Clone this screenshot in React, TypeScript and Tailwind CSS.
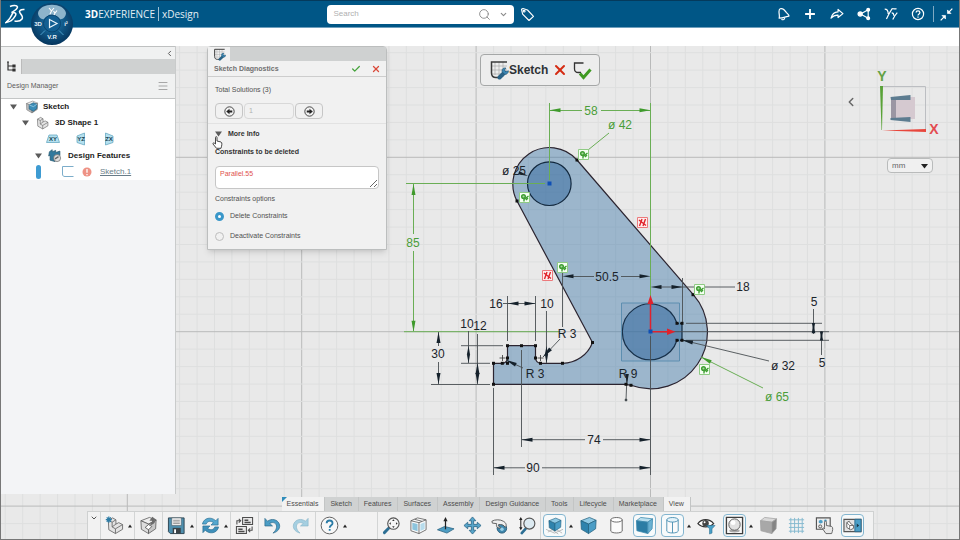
import type { ReactNode } from 'react';
import clsx from 'clsx';
import { Check, ChevronDown, ChevronLeft, Menu, Search, X } from 'lucide-react';

/* ---------- Icons ---------- */

function Icon({ size = 20, children }: { size?: number; children: ReactNode }) {
  return (
    <svg className="shrink-0" width={size} height={size} viewBox="0 0 20 20" fill="none" aria-hidden="true">
      {children}
    </svg>
  );
}

function Cube({ top, left, right, stroke }: { top: string; left: string; right: string; stroke: string }) {
  return (
    <g stroke={stroke} strokeWidth="0.8" strokeLinejoin="round">
      <path d="M11 1.5 L18 4.5 L10 8.5 L2 5 Z" fill={top} />
      <path d="M2 5 L10 8.5 V18.5 L2.5 14 Z" fill={left} />
      <path d="M18 4.5 L10 8.5 V18.5 L17.5 13.5 Z" fill={right} />
    </g>
  );
}

function Cylinder({ blue }: { blue?: boolean }) {
  return (
    <g stroke={blue ? '#3d87ab' : '#555'} strokeWidth="0.9">
      <path d="M4 4 V16 C5.5 18.5 14.5 18.5 16 16 V4" fill="#fbfbfb" />
      <ellipse cx="10" cy="4" rx="6" ry="2.4" fill={blue ? '#e4f3fa' : '#fff'} />
      {blue && <path d="M10 6.4 V17.8" />}
    </g>
  );
}

function Part() {
  return (
    <g stroke="#666" strokeWidth="0.9" strokeLinejoin="round">
      <path d="M3.5 4.5 L8 2 L11.5 4 V8.5 L14.5 7 L18.5 9 V14 L11 18.5 L4 14.5 Z" fill="#e4e4e4" />
      <path d="M3.5 4.5 L7.5 6.5 V11.5 L11 13.5 L18.5 9 M7.5 6.5 L11.5 4 M11 13.5 V18.5 M7.5 11.5 L11.5 8.5" />
    </g>
  );
}

function SketchGrid() {
  return (
    <>
      <path d="M6 2 V15 M10 2 V17 M14 2 V17 M3 6 H18 M3 10 H18 M3 14 H18" stroke="#aaa" strokeWidth="0.7" />
      <path d="M18 2 H2.5 V13 C2.5 16 4 17.5 7 17.5 H10" stroke="#3b3b3b" strokeWidth="1.5" />
      <path d="M10.5 17.5 L15.5 12.5" stroke="#2a6387" strokeWidth="4" strokeLinecap="round" />
      <path d="M13 11.5 C12.5 8.5 15 7.5 17 8 L15.5 10 L16.5 11.5 L19.5 10.8 C19.5 13.5 17 15 15 14 Z" fill="#3a86b4" stroke="#24526f" strokeWidth="0.6" />
    </>
  );
}

const blueCube = <Cube top="#8fc9e4" left="#2f83ad" right="#4a9dc6" stroke="#24627f" />;

const toolIcons: Record<string, ReactNode> = {
  New: (
    <>
      <Part />
      <path d="M4 0.5 V7 M0.8 3.8 H7.2 M1.8 1.5 L6.2 6 M6.2 1.5 L1.8 6" stroke="#2c7ca6" strokeWidth="1.3" />
    </>
  ),
  Insert: (
    <>
      <Cube top="#eee" left="#ddd" right="#c7c7c7" stroke="#555" />
      <path d="M6.5 12 L10 9 L13.5 11 L10 14.5 Z" fill="#fff" stroke="#555" strokeWidth="0.9" />
      <path d="M13 9.5 C16 8.5 17.5 6.5 16.5 4.5 L19 4.5 L14 0.8 L11 5 H13.5 C14 6.5 13 8 11 8.5 Z" fill="#6b6b6b" />
    </>
  ),
  Save: (
    <>
      <path d="M1.5 2 H18 V18.5 H3.5 L1.5 16.5 Z" fill="#4e8fae" stroke="#2c4452" />
      <path d="M5 2 H15 V10 H5 Z" fill="#f4f4f4" stroke="#4b5b64" strokeWidth="0.6" />
      <path d="M6.5 4.5 H13.5 M6.5 6.3 H13.5 M6.5 8 H13.5" stroke="#777" strokeWidth="0.8" />
      <path d="M6 12.5 H14.5 V18.5 H6 Z" fill="#3b4347" />
      <path d="M7.5 14 H9.5 V18 H7.5 Z" fill="#fff" />
    </>
  ),
  Update: (
    <>
      <path d="M1.5 8.5 C3 1.5 11 0.5 15.5 5 L18 2.5 V9.5 H10.5 L13 7 C10 4.5 6.5 5.5 5.5 8.5 Z" fill="#55a8cf" stroke="#286c91" strokeWidth="0.7" />
      <path d="M18.5 11.5 C17 18.5 9 19.5 4.5 15 L2 17.5 V10.5 H9.5 L7 13 C10 15.5 13.5 14.5 14.5 11.5 Z" fill="#3f90ba" stroke="#286c91" strokeWidth="0.7" />
    </>
  ),
  Replace: (
    <g stroke="#4c4c4c" strokeWidth="1.1">
      <path d="M8 1.5 H18.5 V9 H8 Z M1.5 11 H12 V18.5 H1.5 Z" fill="#e8e8e8" />
      <path d="M10 4.5 H14 M10 6.8 H16.5 M3.5 14 H8 M3.5 16.3 H10" strokeWidth="1.5" />
      <path d="M2 9 V5 H5.5 M4 3 L6 5 L4 7 M18 11 V15 H14.5 M16 13 L14 15 L16 17" />
    </g>
  ),
  Undo: <path d="M2 2.5 V10.5 H10 L7 7.8 C11 5.5 15 8 14.2 12 C14 14.5 12.5 16 10.5 18 C16.5 16.5 18.7 12 17 8 C15 3.5 9 2.2 4.8 5.5 Z" fill="#4b9dc5" stroke="#276385" strokeWidth="0.7" />,
  Redo: <path d="M18 2.5 V10.5 H10 L13 7.8 C9 5.5 5 8 5.8 12 C6 14.5 7.5 16 9.5 18 C3.5 16.5 1.3 12 3 8 C5 3.5 11 2.2 15.2 5.5 Z" fill="#a5cfe1" stroke="#88b5c8" strokeWidth="0.7" />,
  Help: (
    <>
      <circle cx="10" cy="10" r="8.8" fill="#f8f8f8" stroke="#5c5c5c" />
      <path d="M7 7.5 C7 3.8 13.2 3.8 13.2 7.5 C13.2 9.7 10.2 9.8 10.2 12.3 M10.2 13.6 V15.6" stroke="#2c7ca6" strokeWidth="1.9" />
    </>
  ),
  'Fit all': (
    <>
      <path d="M2.5 17.5 L7 13" stroke="#2d6f94" strokeWidth="3" strokeLinecap="round" />
      <circle cx="12" cy="8" r="6" fill="#f5f5f5" stroke="#555" strokeWidth="1.2" />
      <path d="M12 3.5 L13.3 5.3 H10.7 Z M12 12.5 L13.3 10.7 H10.7 Z M7.5 8 L9.3 6.7 V9.3 Z M16.5 8 L14.7 6.7 V9.3 Z" fill="#333" />
    </>
  ),
  Views: (
    <g stroke="#515151" strokeWidth="0.8" strokeLinejoin="round">
      <path d="M2 5 L9 2 L18 4 V14.5 L10.5 18.5 L2 15.5 Z" fill="#fafafa" />
      <path d="M3.5 7 L9 8.5 V16 L3.5 14.3 Z" fill="#8cc4dd" stroke="none" />
      <path d="M12 8.3 L16.5 6.5 V13.8 L12 15.8 Z" fill="#b7dcec" stroke="none" />
      <path d="M2 5 L10.5 7 L18 4 M10.5 7 V18.5 M6 3.5 L13.5 5.5" />
    </g>
  ),
  'Normal view': (
    <>
      <path d="M1.5 14.5 L9 11 L19 13.5 L11.5 18 Z" fill="#4e9dc3" stroke="#28617f" strokeWidth="0.8" />
      <path d="M10 14 V4" stroke="#222" strokeWidth="1.3" />
      <path d="M10 1 L12.2 5.5 H7.8 Z" fill="#222" />
    </>
  ),
  Pan: <path d="M10 1 L13.5 5 H11.2 V8.8 H15 V6.5 L19 10 L15 13.5 V11.2 H11.2 V15 H13.5 L10 19 L6.5 15 H8.8 V11.2 H5 V13.5 L1 10 L5 6.5 V8.8 H8.8 V5 H6.5 Z" fill="#57a5ca" stroke="#266181" strokeWidth="0.8" />,
  Rotate: (
    <>
      <circle cx="12.5" cy="13" r="5" fill="#3f88ae" stroke="#285b78" />
      <path d="M2 5.5 C5 3.5 11 3.5 14 5.5 C17 7 18 10 16 12 C14.5 9 12 9 9 9 C8 11 10.5 11.5 12 13 C8 13 6 11.5 7 8 L2.5 7.5 Z" fill="#eee" stroke="#4e4e4e" strokeWidth="0.9" />
      <circle cx="12.6" cy="14" r="1.8" fill="#9ad0e8" />
    </>
  ),
  Zoom: (
    <>
      <path d="M5 18 L9 13.5" stroke="#2d6f94" strokeWidth="2.8" strokeLinecap="round" />
      <circle cx="13" cy="8" r="5.8" fill="#dceaf1" stroke="#555" strokeWidth="1.2" />
      <path d="M4 3 V13" stroke="#222" strokeWidth="1.1" />
      <path d="M4 1 L5.8 4.2 H2.2 Z M4 15 L5.8 11.8 H2.2 Z" fill="#222" />
    </>
  ),
  Perspective: (
    <>
      <path d="M1 14 L10 18 L19 14 M3 17 L10 13 L18 18 M4 12 L14 19" stroke="#aaa" strokeWidth="0.8" />
      <g transform="translate(2.5 1) scale(0.8)">{blueCube}</g>
    </>
  ),
  Shaded: blueCube,
  Wireframe: <Cylinder />,
  Material: (
    <g stroke="#3d89ad" strokeWidth="0.8" strokeLinejoin="round">
      <path d="M6 1.5 L18.5 3 L13.5 6.5 L1.5 5 Z" fill="#b8deee" />
      <path d="M1.5 5 L13.5 6.5 V18.5 L2 15.5 Z" fill="#2b7da5" />
      <path d="M18.5 3 L13.5 6.5 V18.5 L18 13.5 Z" fill="#69b1d2" />
    </g>
  ),
  Edges: <Cylinder blue />,
  'Hide and show': (
    <>
      <path d="M1 8 C5 2.5 13 2.5 17.5 8 C13 12.5 5 12.5 1 8 Z" fill="#fff" stroke="#333" strokeWidth="1.3" />
      <circle cx="9" cy="7.5" r="3.4" fill="#444" />
      <circle cx="8" cy="6.5" r="1" fill="#fff" />
      <path d="M10 10 H19 L15.8 13.5 V18 L13.2 19 V13.5 Z" fill="#49a1c9" stroke="#286c8d" strokeWidth="0.6" />
    </>
  ),
  Ambience: (
    <>
      <path d="M1.5 1.5 H18.5 V18.5 H1.5 Z" fill="#f8f8f8" stroke="#3e3e3e" strokeWidth="1.4" />
      <ellipse cx="10" cy="15.5" rx="5.5" ry="1.8" fill="#aaa" />
      <circle cx="10" cy="9" r="6" fill="#e1e1e1" stroke="#606060" />
      <circle cx="8.5" cy="7" r="2.6" fill="#fff" />
    </>
  ),
  Shadow: (
    <g stroke="#a3a3a3" strokeWidth="0.8" strokeLinejoin="round">
      <path d="M6 1.5 L18.5 3 L13.5 6.5 L1.5 5 Z" fill="#d9d9d9" />
      <path d="M1.5 5 L13.5 6.5 V18.5 L2 15.5 Z" fill="#a8a8a8" />
      <path d="M18.5 3 L13.5 6.5 V18.5 L18 13.5 Z" fill="#848484" />
    </g>
  ),
  Grid: <path d="M4 2 V18 M8 2 V18 M12 2 V18 M16 2 V18 M2 4 H18 M2 8 H18 M2 12 H18 M2 16 H18" stroke="#83b8cf" />,
  Touch: (
    <>
      <path d="M1.5 2 H16 V14 H1.5 Z" fill="#eee" stroke="#555" strokeWidth="1.2" />
      <path d="M4 5 L6 4 L8 5 V7 L6 8 L4 7 Z" fill="#4b9dc5" />
      <circle cx="5.5" cy="11" r="1.6" stroke="#555" />
      <circle cx="11" cy="5" r="1.4" fill="#4b9dc5" />
      <path d="M10 12 V6.5 C10 5 12 5 12 6.5 V10 L17.5 11 C19.5 12 18.5 16 17.5 18.5 H11.5 L8 13.5 C8 12 9.5 12.5 10 13.5 Z" fill="#e8e8e8" stroke="#555" strokeWidth="0.9" />
    </>
  ),
  Panels: (
    <>
      <path d="M1 3.5 H19 V16.5 H1 Z" fill="#e3e3e3" stroke="#555" strokeWidth="1.2" />
      <path d="M12.5 3.5 H19 V16.5 H12.5 Z" fill="#4a9fc8" stroke="#2c6c8e" />
      <path d="M14.5 8 L17 10 L14.5 12 Z" fill="#18394a" />
      <path d="M4 7 L6.5 5.5 L8 8 L11 10 V13 L8 14.5 L4 12 Z" fill="#fff" stroke="#555" strokeWidth="0.9" />
      <path d="M4 7 L7 10 L11 10 M7 10 V14" stroke="#555" strokeWidth="0.8" />
    </>
  ),
};

/* ---------- Header ---------- */

function Compass() {
  return (
    <button aria-label="Compass" className="relative z-10 ml-1.5 self-start">
      <svg width="42" height="44" viewBox="0 0 42 44" aria-hidden="true">
        <defs>
          <radialGradient id="ring" cx="50%" cy="45%" r="55%">
            <stop offset="0" stopColor="#1d7db4" />
            <stop offset="1" stopColor="#06365e" />
          </radialGradient>
        </defs>
        <circle cx="21" cy="23" r="21" fill="url(#ring)" />
        <path d="M7 12 C9 1 33 1 35 12 C35 16 31 19 29 18 C25 13 17 13 13 18 C11 19 7 16 7 12 Z" fill="#8db4cb" />
        <path d="M9.5 34 L14 29.5 M32.5 34 L28 29.5" stroke="#4b9dc8" />
        <circle cx="21" cy="22.5" r="8.5" fill="#125f92" stroke="#0a4570" />
        <path d="M18.5 18.5 L26 22.5 L18.5 26.5 Z" fill="none" stroke="#e9f4fa" strokeWidth="1.2" />
        <g fill="#eaf3f8" fontFamily="Liberation Sans, sans-serif" fontSize="6" fontWeight="bold" textAnchor="middle">
          <text x="7" y="25">3D</text>
          <text x="21" y="38">V.R</text>
          <text x="35" y="25">i²</text>
        </g>
        <path d="M18 7 L20.5 10 L23 7 M20.5 10 L19 13 M22.5 10 L24 12 L26 9.5 M24 12 L23 14" stroke="#fff" strokeWidth="1.1" fill="none" />
      </svg>
    </button>
  );
}

const headerIcons = [
  { label: 'Notifications', icon: <path d="M4.5 16 C6 11 2 4.5 6 2.5 C10 1 13 5 15 8 C16.5 10 19 11 18.5 13 C15 13.5 10 16 4.5 16 Z M8 17 C9 19 12 18.5 12.5 16" /> },
  { label: 'Add', icon: <path d="M10 3 V17 M3 10 H17" strokeWidth="2.6" /> },
  { label: 'Share', icon: <path d="M1.5 16 C3 9.5 6 7.3 11.5 7 V3.5 L18.5 9.5 L11.5 15 V11.5 C7 11.3 4.5 12.5 1.5 16 Z" /> },
  { label: 'Collaborate', icon: <g><path d="M16 4 L5 10 L16 16 Z" /><circle cx="16" cy="4" r="2" fill="#fff" /><circle cx="16" cy="16" r="2" fill="#fff" /><circle cx="4.5" cy="10" r="3" fill="#fff" /></g> },
  { label: 'Apps', icon: <path d="M1 3 C4 3 6 6 6 10 M12 2 C9 6 7 10 3.5 17 M11 8.5 C13 8.5 14 10 14 12.5 M19 8 C16 11 14.5 14 12.5 18 M12 2 C13 3 15 3 18 2.5" /> },
  { label: 'Help', icon: <g><circle cx="10" cy="10" r="8" /><path d="M7.3 8 C7.3 4.8 12.7 4.8 12.7 8 C12.7 10 10 9.8 10 12.3 M10 13.5 V15.3" strokeWidth="1.8" /></g> },
];

function Header() {
  return (
    <header className="flex h-7 items-center border-b border-t border-b-[#6f9fbd] border-t-[#043a5c] bg-[#005686] text-white">
      <svg className="ml-1 w-5 shrink-0" height="22" viewBox="0 0 20 22" fill="none" stroke="#fff" strokeWidth="1.5" aria-label="Dassault Systèmes">
        <path d="M5 3.5 C8 2 12 2 12.5 4 C12.5 6 9 8 6.5 9.5 C11 9 12 11 9.5 14 C8 17 4 19 1 19.5 C4 17 6.5 13 8 9.5" />
        <path d="M19.5 6.5 C15.5 6 13.5 8 15 10 C16.5 12 18.5 14 17 16 C15.5 18 12 18.5 9.5 18" />
      </svg>
      <Compass />
      <h1 className="ml-3 flex items-center gap-[3px] whitespace-nowrap font-['Open_Sans',sans-serif] text-[10px] text-[#e3eef4]">
        <span>
          <b className="text-white">3D</b>EXPERIENCE
        </span>
        <span className="h-3.5 w-px bg-[#9fc0d3]" />
        <span>xDesign</span>
      </h1>
      <form className="ml-auto flex h-[19px] w-[187px] items-center rounded-sm bg-white px-1.5 text-[#8a8a8a]">
        <input aria-label="Search" placeholder="Search" className="min-w-0 flex-1 text-[8px] outline-none placeholder:text-[#b0b0b0]" />
        <button type="button" aria-label="Run search">
          <Search size={13} strokeWidth={1.7} />
        </button>
        <button type="button" aria-label="Search options" className="ml-2">
          <ChevronDown size={9} strokeWidth={3} />
        </button>
      </form>
      <button aria-label="Tags" className="ml-1.5">
        <svg width="15" height="15" viewBox="0 0 20 20" fill="none" stroke="#fff" strokeWidth="1.5" strokeLinejoin="round">
          <path d="M2 3 L3.5 9.5 L12 18 L18 12.5 L10 4 L4 2 Z" />
          <circle cx="5.5" cy="5.5" r="1.2" />
        </svg>
      </button>
      <nav className="ml-auto flex items-center gap-[13px] pl-28">
        {headerIcons.map((item) => (
          <button key={item.label} aria-label={item.label}>
            <svg width="14" height="14" viewBox="0 0 20 20" fill="none" stroke="#fff" strokeWidth="1.7" strokeLinejoin="round">
              {item.icon}
            </svg>
          </button>
        ))}
      </nav>
      <button aria-label="Minimize" className="ml-2 mr-1.5 flex h-4 items-center border-l border-[#7fa9c2] pl-1.5">
        <svg width="13" height="13" viewBox="0 0 20 20" fill="#fff" stroke="#fff" strokeWidth="2">
          <path d="M19 1 L14 6 M1 19 L6 14" />
          <path d="M11.5 3 V8.5 H17 Z M3 11.5 H8.5 V17 Z" strokeWidth="1" />
        </svg>
      </button>
    </header>
  );
}

/* ---------- Design Manager ---------- */

function PlaneIcon({ label, shape }: { label: string; shape: string }) {
  return (
    <button aria-label={`${label} plane`} className="w-7">
      <svg width="14" height="14" viewBox="0 0 14 14">
        <path d={shape} fill="#b4e0ef" stroke="#68aac3" strokeWidth="0.8" />
        <text x="7" y="9" textAnchor="middle" fontSize="6" fontWeight="bold" fontFamily="Liberation Sans, sans-serif" fill="#174050">
          {label}
        </text>
      </svg>
    </button>
  );
}

function Caret() {
  return (
    <svg className="shrink-0" width="7" height="6" viewBox="0 0 7 6" aria-hidden="true">
      <path d="M0 0.5 H7 L3.5 5.5 Z" fill="#5b5b5b" />
    </svg>
  );
}

function DesignManager() {
  return (
    <aside className="flex w-[175px] flex-col self-stretch border-r border-[#c9cbcb] bg-[#f3f4f6]">
      <div className="flex h-[13px] items-center justify-end border-t border-[#bfc1c1] bg-[#f0f1f1] pr-px">
        <button aria-label="Collapse panel">
          <ChevronLeft size={9} strokeWidth={2.5} color="#555" />
        </button>
      </div>
      <div className="flex h-[15px] bg-[#cfd1d1]">
        <button aria-label="Tree" className="flex w-[21px] items-center justify-center border-r border-[#bbb] bg-[#f0f1f1]">
          <svg width="10" height="11" viewBox="0 0 10 11" stroke="#333" fill="#333" strokeWidth="1.2">
            <path d="M2 1 V9 H9 M2 5 H8" fill="none" />
            <path d="M1 1 H3 M7 4 H9 V6 H7 Z M7 8 H9 V10 H7 Z" />
          </svg>
        </button>
      </div>
      <div className="flex h-[25px] items-center justify-between border-b border-[#c4c6c6] bg-[#f0f1f1] pl-1.5 pr-1.5 text-[#5c5c5c]">
        <h2>Design Manager</h2>
        <Menu size={12} strokeWidth={1.7} color="#999" />
      </div>
      <ul className="bg-white pb-px text-[8px] font-bold text-[#1c1c1c]">
        <li className="flex h-4 items-center gap-2 pl-[9px]">
          <Caret />
          <span className="-mr-1 flex">
            <Icon size={14}>
              <Cube top="#eee" left="#bbb" right="#999" stroke="#777" />
              <path d="M6 7 L12 4 L17 6 V12 L12 16 L6 13 Z" fill="#3c8db7" stroke="#286382" />
              <path d="M6 7 L12 9.5 L17 6" stroke="#a9d6ea" />
            </Icon>
          </span>
          Sketch
        </li>
        <li className="flex h-4 items-center gap-1.5 pl-[21px]">
          <Caret />
          <Icon size={14}><Part /></Icon>
          3D Shape 1
        </li>
        <li className="flex h-4 items-center pl-[45px]">
          <PlaneIcon label="XY" shape="M3 3 H11 L13.5 10.5 H0.5 Z" />
          <PlaneIcon label="YZ" shape="M3 4 L10.5 1 V13 L3 10.5 Z" />
          <PlaneIcon label="ZX" shape="M3.5 1 L11 4 V10.5 L3.5 13 Z" />
        </li>
        <li className="flex h-4 items-center gap-1.5 pl-[34px] pt-px">
          <Caret />
          <Icon size={14}>
            <path d="M2 4 L6 1 V4 L11 2 V5 L17 3 V9 L10 18 L3 16 V9 L1 10 Z" fill="#31799d" stroke="#25576f" />
            <circle cx="13" cy="13" r="5" fill="#ddd" stroke="#666" />
            <path d="M10 14 L15 11" stroke="#666" strokeWidth="2" />
          </Icon>
          Design Features
        </li>
        <li className="flex h-4 items-center pl-[35px] pt-px font-medium text-[#687c88]">
          <span className="h-3.5 w-[5px] rounded-sm bg-[#3e9bd2]" />
          <svg className="ml-5" width="13" height="13" viewBox="0 0 13 13" fill="none" stroke="#7cadca">
            <path d="M12.5 1.5 H1.5 V9 C1.5 11 2.5 11.5 4 11.5 H12.5" />
          </svg>
          <svg className="ml-2" width="10" height="10" viewBox="0 0 10 10" aria-label="Error">
            <circle cx="5" cy="5" r="4.5" fill="#ee9285" />
            <path d="M5 2 V5.8 M5 7 V8.3" stroke="#fff" strokeWidth="1.3" />
          </svg>
          <a href="#sketch-1" className="ml-2 underline">
            Sketch.1
          </a>
        </li>
      </ul>
    </aside>
  );
}

/* ---------- Sketch Diagnostics ---------- */

function RoundArrow({ flip }: { flip?: boolean }) {
  return (
    <svg width="11" height="11" viewBox="0 0 20 20" className={clsx(flip && 'rotate-180')} aria-hidden="true">
      <circle cx="10" cy="10" r="8.5" fill="none" stroke="#333" strokeWidth="1.6" />
      <path d="M4 10 L10 5 V8 H15 V12 H10 V15 Z" fill="#222" />
    </svg>
  );
}

function Diagnostics() {
  return (
    <section className="ml-[31px] w-[180px] self-start rounded-t-sm border border-[#bcbebe] bg-[#f1f1f1] text-[#505050] shadow-md">
      <div className="flex h-3.5 bg-[#cfd1d1]">
        <span className="flex w-[22px] items-center justify-center bg-[#f1f1f1]">
          <Icon size={13}><SketchGrid /></Icon>
        </span>
      </div>
      <div className="flex h-4 items-center border-b border-[#cdcdcd] pl-1.5 pr-[5px]">
        <h2 className="flex-1 font-bold text-[#707070]">Sketch Diagnostics</h2>
        <button aria-label="OK"><Check size={10} strokeWidth={3} color="#45a33c" /></button>
        <button aria-label="Cancel" className="ml-2.5"><X size={10} strokeWidth={3} color="#da4a3a" /></button>
      </div>
      <div className="px-[7px] pt-2">
        <p className="leading-[10px]">Total Solutions (3)</p>
        <div className="mt-2 flex h-4 gap-px">
          <button aria-label="Previous solution" className="flex w-7 items-center justify-center rounded-sm border border-[#c6c6c6]">
            <RoundArrow />
          </button>
          <input aria-label="Solution" defaultValue="1" className="w-[50px] rounded-sm border border-[#d8d8d8] px-1 text-[#b0b0b0]" />
          <button aria-label="Next solution" className="flex w-7 items-center justify-center rounded-sm border border-[#c6c6c6]">
            <RoundArrow flip />
          </button>
        </div>
      </div>
      <div className="mt-1 border-t border-[#e2e2e2] px-[7px] pb-[3px] pt-1 text-[#333]">
        <button className="relative flex h-3 items-center gap-1.5 font-bold">
          <Caret />
          More Info
          <svg className="absolute left-[-3px] top-2" width="11" height="13" viewBox="0 0 11 13" aria-hidden="true">
            <path d="M3.5 8 V1.5 C3.5 0.3 5 0.3 5 1.5 V5 L9 6 C10.5 6.5 9.8 9.5 9 12.3 H4.5 L1 8 C0.5 6.8 2 6.5 3.5 8 Z" fill="#fff" stroke="#333" strokeWidth="0.9" />
          </svg>
        </button>
        <label htmlFor="constraints" className="mt-1.5 block font-bold leading-3">
          Constraints to be deleted
        </label>
        <textarea
          id="constraints"
          defaultValue="Parallel.55"
          className="mt-2 block h-[23px] w-[164px] rounded-sm border border-[#c6c6c6] bg-white px-1 pt-0.5 leading-[10px] text-[#e0524c]"
        />
        <fieldset className="text-[#505050]">
          <legend className="pb-px pt-1 leading-3">Constraints options</legend>
          <label className="flex h-5 items-center gap-1.5">
            <input type="radio" name="mode" defaultChecked className="size-[9px] appearance-none rounded-full border border-[#bdbdbd] checked:border-[3px] checked:border-[#3a97c9] checked:bg-white" />
            Delete Constraints
          </label>
          <label className="flex h-5 items-center gap-1.5">
            <input type="radio" name="mode" className="size-[9px] appearance-none rounded-full border border-[#bdbdbd] checked:border-[3px] checked:border-[#3a97c9] checked:bg-white" />
            Deactivate Constraints
          </label>
        </fieldset>
      </div>
    </section>
  );
}

/* ---------- Sketch drawing ---------- */

// grid lines every 10 mm, origin of the sketch at 650.5 / 331.7
const ORIGIN_X = 650.5;
const ORIGIN_Y = 331.7;
const STEP = 17.44;
const columns = Array.from({ length: 56 }, (_, i) => i - 37);
const rows = Array.from({ length: 30 }, (_, i) => i - 17);

type Head = { x: number; y: number; angle: number; size?: number };

function Heads({ items }: { items: Head[] }) {
  return (
    <g stroke="none">
      {items.map((h, i) => (
        <path key={i} d="M0 0 L-11 2 V-2 Z" transform={`translate(${h.x} ${h.y}) rotate(${h.angle}) scale(${h.size ?? 1})`} />
      ))}
    </g>
  );
}

const blackHeads: Head[] = [
  { x: 507.5, y: 303.5, angle: 180 },
  { x: 535.5, y: 303.5, angle: 0 },
  { x: 468.5, y: 346, angle: -90, size: 0.8 },
  { x: 468.5, y: 363, angle: 90, size: 0.8 },
  { x: 477.5, y: 363, angle: -90 },
  { x: 477.5, y: 384, angle: 90 },
  { x: 438.5, y: 332, angle: -90 },
  { x: 438.5, y: 384, angle: 90 },
  { x: 546.5, y: 346, angle: -90, size: 0.8 },
  { x: 546.5, y: 363, angle: 90, size: 0.8 },
  { x: 521.5, y: 439.7, angle: 180 },
  { x: 650.5, y: 439.7, angle: 0 },
  { x: 493.5, y: 467.8, angle: 180 },
  { x: 650.5, y: 467.8, angle: 0 },
  { x: 562.5, y: 276.3, angle: 180 },
  { x: 650.5, y: 276.3, angle: 0 },
  { x: 650.5, y: 287, angle: 180 },
  { x: 682.5, y: 287, angle: 0 },
  { x: 813.5, y: 331.7, angle: 90, size: 0.8 },
  { x: 813.5, y: 323.3, angle: -90, size: 0.9 },
  { x: 821.5, y: 331.7, angle: -90, size: 0.8 },
  { x: 821.5, y: 340.3, angle: 90, size: 0.8 },
  { x: 506, y: 360, angle: 206 },
  { x: 543, y: 357, angle: 133 },
  { x: 682, y: 340, angle: 193 },
  { x: 528, y: 176, angle: 20, size: 0.9 },
  { x: 627, y: 384, angle: 90, size: 0.9 },
];

const greenHeads: Head[] = [
  { x: 549.5, y: 110.3, angle: 180 },
  { x: 650.5, y: 110.3, angle: 0 },
  { x: 413.5, y: 184, angle: -90 },
  { x: 413.5, y: 331.7, angle: 90 },
  { x: 701, y: 357, angle: 207 },
];

const blackTexts = [
  { x: 607, y: 281, text: '50.5' },
  { x: 743, y: 291, text: '18' },
  { x: 814, y: 306, text: '5' },
  { x: 822, y: 367, text: '5' },
  { x: 783, y: 370, text: 'ø 32' },
  { x: 514, y: 175, text: 'ø 25' },
  { x: 496, y: 308, text: '16' },
  { x: 547, y: 308, text: '10' },
  { x: 467, y: 328, text: '10' },
  { x: 480, y: 330, text: '12' },
  { x: 438, y: 358, text: '30' },
  { x: 567, y: 338, text: 'R 3' },
  { x: 535, y: 378, text: 'R 3' },
  { x: 628, y: 378, text: 'R 9' },
  { x: 594, y: 444, text: '74' },
  { x: 533, y: 472, text: '90' },
];

const greenTexts = [
  { x: 591, y: 115, text: '58' },
  { x: 620, y: 129, text: 'ø 42' },
  { x: 413, y: 247, text: '85' },
  { x: 777, y: 401, text: 'ø 65' },
];

const points = [
  [577, 160], [517, 201], [693, 294.7], [592.5, 342.5], [562.5, 363.3], [540.5, 363.3], [535.5, 358], [535.5, 345.7],
  [521.5, 345.7], [507.5, 345.7], [507.5, 358], [507.5, 363.3], [502.3, 363.3], [493.5, 363.3], [493.5, 384.3],
  [626, 384.3], [631, 385.3], [677, 323.3], [682, 323.3], [677, 340.3], [682, 340.3],
];

const tangents = [[583, 154], [524, 197], [562, 267], [699, 289], [704, 369]];
const conflicts = [[642, 222], [547, 275]];

function Drawing() {
  return (
    <svg className="absolute inset-0 size-full" viewBox="1 46 958 493" preserveAspectRatio="xMidYMid slice" role="img" aria-label="Sketch with dimensions">
      {columns.map((n) => (
        <path key={n} d={`M${ORIGIN_X + n * STEP} 0 V540`} stroke={n % 10 === 0 ? '#b9baba' : '#dedfdf'} />
      ))}
      {rows.map((n) => (
        <path key={n} d={`M0 ${ORIGIN_Y + n * STEP} H960`} stroke={n % 10 === 0 ? '#b9baba' : '#dedfdf'} />
      ))}

      {/* Profile */}
      <path
        d="M592.5 342.5 A32 32 0 0 1 562.5 363.3 H540.5 A5.2 5.2 0 0 1 535.5 358 V345.7 H507.5 V358 A5.2 5.2 0 0 1 502.3 363.3 H493.5 V384.3 H626 L631 385.3 A56.7 56.7 0 0 0 693.3 294.7 L577 160 A36.6 36.6 0 0 0 517 201 Z"
        fill="#3f77a8"
        fillOpacity="0.45"
        stroke="#2b2430"
        strokeWidth="1.2"
      />
      <g fill="#2f659c" fillOpacity="0.5" stroke="#12283e" strokeWidth="1.2">
        <circle cx="549.3" cy="183.7" r="21.8" />
        <path d="M677 323.3 A28 28 0 1 0 677 340.3 H682 V323.3 Z" />
      </g>
      <path d="M621.5 303 H679.5 V361 H621.5 Z" fill="#3f77a8" fillOpacity="0.12" stroke="#5d8eb0" />

      {/* Driving dimensions */}
      <g stroke="#6aae55" fill="#3f9a2c">
        <path d="M549.5 103 V180 M650.5 103 V296 M550 110.5 H582 M601 110.5 H650 M609 133 L588 150 M406 183.5 H545 M413.5 184 V234 M413.5 251 V331 M404 331.7 H560 M763 388 L701 357" fill="none" />
        <Heads items={greenHeads} />
      </g>

      {/* Reference dimensions */}
      <g stroke="#4a4f52" strokeWidth="0.9" fill="#15212b">
        <path
          d="M650.5 336 V475 M573 276.5 H594 M621 276.5 H640 M660 287 H735 M562.5 272 V327 M682.5 278 V323 M686 323.3 H822 M660 331.7 H829 M686 340.3 H829 M813.5 309 V334 M821.5 331 V355 M769 361 L682 340 M503 303.5 H535 M507.5 296 V341 M535.5 296 V341 M546.5 311 V363 M461 345.7 H503 M461 363.3 H490 M431 384.5 H490 M468.5 331 V363 M477.5 334 V384 M438.5 332 V346 M438.5 362 V384 M560 339 L543 357 M523 368 L506 360 M521.5 350 V447 M493.5 388 V475 M522 439.7 H585 M603 439.7 H650 M494 467.8 H525 M542 467.8 H650 M627 376 L626 400"
          fill="none"
        />
        <Heads items={blackHeads} />
        <circle cx="626" cy="400" r="1" />
      </g>
      {points.map(([x, y], i) => (
        <path key={i} d={`M${x - 1.5} ${y} H${x + 1.5}`} stroke="#111" strokeWidth="3" />
      ))}
      <path d="M502.5 355 V361 M499.5 358 H505.5 M540.5 355 V361 M537.5 358 H543.5" stroke="#333" strokeWidth="0.8" />

      {/* Origin */}
      <path d="M650.5 331.7 V304 M650.5 331.7 H668" stroke="#e0222c" strokeWidth="1.5" />
      <path d="M650.5 295 L653.5 304 H647.5 Z M675.5 331.7 L667 328.5 V335 Z" fill="#e0222c" />
      <path d="M547.5 181.5 H551.5 V185.5 H547.5 Z M648.5 329.5 H652.5 V333.5 H648.5 Z" fill="#0e4fb5" />

      {/* Constraint badges */}
      {tangents.map(([x, y]) => (
        <g key={`${x}-${y}`} transform={`translate(${x - 5} ${y - 5})`} fill="none" stroke="#3e9e32">
          <path d="M0.5 0.5 H10.5 V10.5 H0.5 Z" fill="#f5fff2" stroke="#8fcb84" />
          <circle cx="4.5" cy="4.5" r="1.8" fill="#a9d7a0" strokeWidth="1.5" />
          <path d="M5 9.5 V7 M5 7.5 L9.5 4 M7 8 L9 6" strokeWidth="1.4" />
        </g>
      ))}
      {conflicts.map(([x, y]) => (
        <g key={`${x}-${y}`} transform={`translate(${x - 5} ${y - 5})`} fill="none" stroke="#e0232b">
          <path d="M0.5 0.5 H10.5 V10.5 H0.5 Z" fill="#fdeeee" stroke="#ec7a7c" />
          <path d="M2.5 9 L5 2 M6 9 L8.5 2 M2 3 L9 8.5" strokeWidth="1.4" />
        </g>
      ))}

      <g className="font-['Liberation_Sans',Arial,sans-serif] text-[12px]" textAnchor="middle">
        <g fill="#1b242b">
          {blackTexts.map((t, i) => (
            <text key={i} x={t.x} y={t.y}>{t.text}</text>
          ))}
        </g>
        <g fill="#4a9d38">
          {greenTexts.map((t) => (
            <text key={t.text} x={t.x} y={t.y}>{t.text}</text>
          ))}
        </g>
      </g>
    </svg>
  );
}

/* ---------- Canvas controls ---------- */

function SketchBar() {
  return (
    <div className="ml-[93px] mt-2 flex h-8 w-[120px] items-center self-start rounded border border-[#a5a7a7] bg-[#ededed] pl-2">
      <Icon size={20}><SketchGrid /></Icon>
      <span className="text-[12px] font-bold text-[#2e3337]">Sketch</span>
      <button aria-label="Cancel sketch" className="ml-1">
        <X size={16} strokeWidth={3} color="#d52b12" />
      </button>
      <button aria-label="Exit sketch" className="ml-1">
        <Icon size={20}>
          <path d="M11.5 3 H2.5 V9 C2.5 11.5 4 12.5 6.5 12.5 H9" stroke="#333" strokeWidth="1.3" />
          <path d="M8 13.5 L11.5 17.5 L18.5 9.5" stroke="#3f9a22" strokeWidth="3" />
        </Icon>
      </button>
    </div>
  );
}

function ViewControls() {
  return (
    <div className="ml-auto mr-[19px] mt-5 flex flex-col items-end self-start">
      <div className="flex items-center">
        <button aria-label="Show view list" className="mr-[18px]">
          <ChevronLeft size={14} strokeWidth={2.5} color="#666" />
        </button>
        <svg width="64" height="72" viewBox="0 0 64 72" aria-label="Axis cube">
          <path d="M6 20.5 H49.5 V64" fill="none" stroke="#bcbec2" />
          <path d="M15 31 H20 V54 H15 Z" fill="#9b96a3" />
          <path d="M20 31 H39 V53 H20 Z" fill="#d5c9d0" />
          <path d="M14.5 31 L34.5 29 V34 H15 Z M14.5 54 V52 L34.5 51 V56 Z" fill="#5d7c90" />
          <path d="M4 20 H7 L6 64 H5.5 Z" fill="#59a238" />
          <path d="M6 64.5 L50 63 V66 Z" fill="#e8463c" />
          <g fontFamily="Liberation Sans, Arial, sans-serif" fontSize="14" fontWeight="bold" textAnchor="middle">
            <text x="6" y="15" fill="#64a245">Y</text>
            <text x="58" y="68" fill="#e34b50">X</text>
          </g>
        </svg>
      </div>
      <div className="mr-[7px] mt-5 grid items-center rounded border border-[#b9bbbb] bg-[#f0f0f0]">
        <select aria-label="Units" defaultValue="mm" className="col-start-1 row-start-1 h-[13px] w-11 appearance-none pl-1 text-[8px] text-[#666]">
          <option>mm</option>
          <option>cm</option>
        </select>
        <svg className="pointer-events-none col-start-1 row-start-1 mr-1 justify-self-end" width="7" height="6" viewBox="0 0 7 6" aria-hidden="true">
          <path d="M0 1 H7 L3.5 5.5 Z" fill="#222" />
        </svg>
      </div>
    </div>
  );
}

/* ---------- Action bar ---------- */

const tabs = ['Essentials', 'Sketch', 'Features', 'Surfaces', 'Assembly', 'Design Guidance', 'Tools', 'Lifecycle', 'Marketplace', 'View'];

type Tool = { name: string; menu?: boolean; active?: boolean };

const essentialGroups: Tool[][] = [
  [{ name: 'New', menu: true }],
  [{ name: 'Insert' }],
  [{ name: 'Save', menu: true }],
  [{ name: 'Update', menu: true }],
  [{ name: 'Replace' }],
  [{ name: 'Undo' }, { name: 'Redo' }],
  [{ name: 'Help', menu: true }],
];

const viewGroups: Tool[][] = [
  [{ name: 'Fit all' }, { name: 'Views' }, { name: 'Normal view' }, { name: 'Pan' }, { name: 'Rotate' }, { name: 'Zoom' }],
  [
    { name: 'Perspective', menu: true, active: true },
    { name: 'Shaded' },
    { name: 'Wireframe' },
    { name: 'Material', active: true },
    { name: 'Edges', menu: true, active: true },
    { name: 'Hide and show' },
    { name: 'Ambience', menu: true, active: true },
    { name: 'Shadow' },
    { name: 'Grid' },
    { name: 'Touch' },
    { name: 'Panels', active: true },
  ],
];

function ToolGroup({ tools, wide }: { tools: Tool[]; wide?: boolean }) {
  return (
    <div className="flex items-center border-l border-[#d3d5d5]">
      {tools.map((tool) => (
        <div key={tool.name} className="flex items-center">
          <div className={clsx('flex justify-center', wide ? 'w-7' : 'w-[27px]')}>
            <button
              aria-label={tool.name}
              className={clsx('flex size-[23px] items-center justify-center rounded-sm border', tool.active ? 'border-[#83b5cf] bg-[#f7fafb]' : 'border-transparent')}
            >
              <Icon size={19}>{toolIcons[tool.name]}</Icon>
            </button>
          </div>
          {tool.menu && (
            <button aria-label={`${tool.name} options`} className="w-1.5">
              <svg width="4" height="4" viewBox="0 0 4 4" aria-hidden="true">
                <path d="M2 0.5 L4 3.5 H0 Z" fill="#222" />
              </svg>
            </button>
          )}
        </div>
      ))}
    </div>
  );
}

function ActionBar() {
  return (
    <footer className="relative mx-auto w-[787px]">
      <div className="ml-[195px] flex w-max rounded-t bg-[#d0d2d2]">
        {tabs.map((tab, i) => (
          <button
            key={tab}
            className={clsx(
              'h-3.5 whitespace-nowrap border-r border-[#c3c5c5] pl-[5px] pr-1.5 text-[#4c4c4c]',
              (tab === 'Essentials' || tab === 'View') && 'bg-[#f2f2f2]',
            )}
          >
            {i === 0 && (
              <svg className="absolute left-[195px] top-0" width="5" height="5" viewBox="0 0 5 5" aria-hidden="true">
                <path d="M0 0 H5 L0 5 Z" fill="#2f8cba" />
              </svg>
            )}
            {tab}
          </button>
        ))}
      </div>
      <div className="flex h-7 items-stretch border border-b-0 border-[#cfd1d1] bg-[#f2f2f2]">
        <button aria-label="Collapse action bar" className="flex w-3 justify-center pt-0.5">
          <ChevronDown size={8} strokeWidth={3} color="#555" />
        </button>
        {essentialGroups.map((group) => (
          <ToolGroup key={group[0].name} tools={group} wide={group.length > 1} />
        ))}
        <div className="w-7" />
        {viewGroups.map((group, i) => (
          <ToolGroup key={group[0].name} tools={group} wide={i === 1} />
        ))}
      </div>
    </footer>
  );
}

export default function App() {
  return (
    <div className="flex min-h-screen flex-col border-x border-b border-x-[#777] border-b-[#777] bg-white font-['Liberation_Sans',Arial,sans-serif] text-[7px] leading-[10px]">
      <Header />
      <main className="relative mt-[18px] flex flex-1 flex-col overflow-hidden bg-[#e9e9e9]">
        <Drawing />
        <div className="relative flex flex-1 items-start">
          <DesignManager />
          <Diagnostics />
          <SketchBar />
          <ViewControls />
        </div>
        <div className="relative mt-[3px]">
          <ActionBar />
        </div>
      </main>
    </div>
  );
}
